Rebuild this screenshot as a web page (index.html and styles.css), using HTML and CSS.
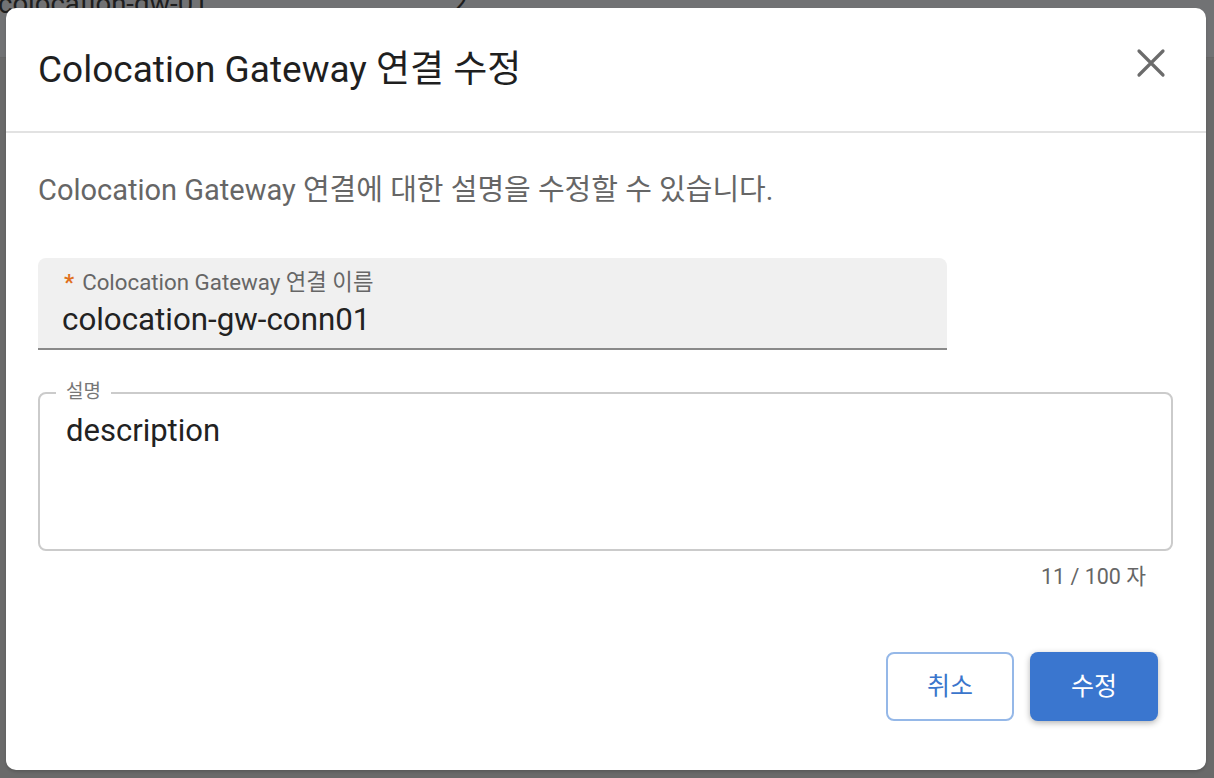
FILE: index.html
```html
<!DOCTYPE html>
<html lang="ko">
<head>
<meta charset="utf-8">
<title>Colocation Gateway 연결 수정</title>
<link rel="stylesheet" href="styles.css">
</head>
<body>
<div class="page">
  <div class="page-row page-row-top">
    <span class="cell cell-name">colocation-gw-01</span>
    <span class="cell cell-count">2</span>
  </div>
  <div class="page-rest"></div>
</div>

<div class="dialog" role="dialog" aria-labelledby="dlg-title">
  <header class="dialog-header">
    <h1 class="dialog-title" id="dlg-title">Colocation Gateway 연결 수정</h1>
    <button class="close-btn" type="button" aria-label="닫기">
      <svg width="30" height="30" viewBox="0 0 30 30" aria-hidden="true">
        <path d="M3 3 L27 27 M27 3 L3 27" stroke="#6b6b6b" stroke-width="3.2" stroke-linecap="round" fill="none"/>
      </svg>
    </button>
  </header>
  <div class="dialog-body">
    <p class="dialog-desc">Colocation Gateway 연결에 대한 설명을 수정할 수 있습니다.</p>

    <div class="field-filled">
      <label class="filled-label"><span class="req">*</span>Colocation Gateway 연결 이름</label>
      <div class="filled-value">colocation-gw-conn01</div>
    </div>

    <div class="field-outlined">
      <span class="outlined-legend">설명</span>
      <div class="outlined-value">description</div>
    </div>
    <div class="counter">11 / 100 자</div>
  </div>
  <footer class="dialog-actions">
    <button class="btn btn-outline" type="button">취소</button>
    <button class="btn btn-primary" type="button">수정</button>
  </footer>
</div>
</body>
</html>
```

FILE: styles.css
```css
* { box-sizing: border-box; }
html, body { margin: 0; padding: 0; }
body {
  width: 1214px;
  height: 778px;
  overflow: hidden;
  font-family: Roboto, "Noto Sans CJK KR", sans-serif;
  background: #6a6a6a;
  position: relative;
}
.page { display: flex; flex-direction: column; height: 100%; }
.page-row-top {
  height: 58px;
  background: #717274;
  border-bottom: 1px solid #676767;
  display: flex;
  align-items: flex-start;
}
.cell {
  font-size: 27.5px;
  color: #1e1e1e;
  line-height: 1;
  margin-top: -10px;
}
.cell-name { margin-left: -2px; width: 454px; }
.page-rest { flex: 1; background: #6a6a6a; }

.dialog {
  position: absolute;
  left: 6px;
  top: 8px;
  width: 1200px;
  height: 762px;
  background: #fff;
  border-radius: 10px;
  box-shadow: 0 2px 3px rgba(0,0,0,0.15);
  display: flex;
  flex-direction: column;
}
.dialog-header {
  height: 125px;
  border-bottom: 2px solid #e2e2e2;
  display: flex;
  align-items: flex-start;
  justify-content: space-between;
  padding: 0 40px 0 32px;
}
.dialog-title {
  margin: 40px 0 0;
  font-size: 37px;
  font-weight: 400;
  color: #1f1f1f;
  line-height: 44px;
}
.close-btn {
  margin-top: 40px;
  background: none;
  border: 0;
  padding: 0;
  width: 30px;
  height: 30px;
  cursor: pointer;
}
.dialog-body {
  padding: 40px 32px 0;
  flex: 1;
}
.dialog-desc {
  margin: 0;
  font-size: 29px;
  line-height: 34px;
  color: #666;
}
.field-filled {
  margin-top: 51px;
  width: 909px;
  height: 92px;
  background: #f0f0f0;
  border-radius: 8px 8px 0 0;
  border-bottom: 2px solid #8a8a8a;
  padding: 11px 24px 0;
}
.filled-label {
  display: block;
  font-size: 22.3px;
  line-height: 26px;
  color: #666;
  padding-left: 2px;
}
.req {
  color: #e0701c;
  font-weight: 700;
  margin-right: 8px;
}
.filled-value {
  margin-top: 7px;
  font-size: 31.3px;
  line-height: 36px;
  color: #222;
}
.field-outlined {
  position: relative;
  margin-top: 42px;
  width: 1135px;
  height: 159px;
  border: 2px solid #cbcbcb;
  border-radius: 8px;
  padding: 19px 26px;
}
.outlined-legend {
  position: absolute;
  left: 16px;
  top: -14px;
  padding: 0 10px;
  background: #fff;
  font-size: 19px;
  line-height: 24px;
  color: #777;
}
.outlined-value {
  font-size: 31px;
  line-height: 36px;
  color: #222;
}
.counter {
  width: 1108px;
  text-align: right;
  margin-top: 13px;
  font-size: 21.5px;
  line-height: 26px;
  color: #666;
}
.dialog-actions {
  display: flex;
  justify-content: flex-end;
  gap: 16px;
  padding: 0 48px 49px;
}
.btn {
  width: 128px;
  height: 69px;
  border-radius: 8px;
  font-family: Roboto, "Noto Sans CJK KR", sans-serif;
  font-size: 25px;
  line-height: 1;
  padding: 0;
  cursor: pointer;
}
.btn-outline {
  background: #fff;
  border: 2px solid #95b8e8;
  color: #3b76cc;
}
.btn-primary {
  background: #3a76cf;
  border: 0;
  color: #fff;
  box-shadow: 0 2px 6px rgba(0,0,0,0.3);
}
```
